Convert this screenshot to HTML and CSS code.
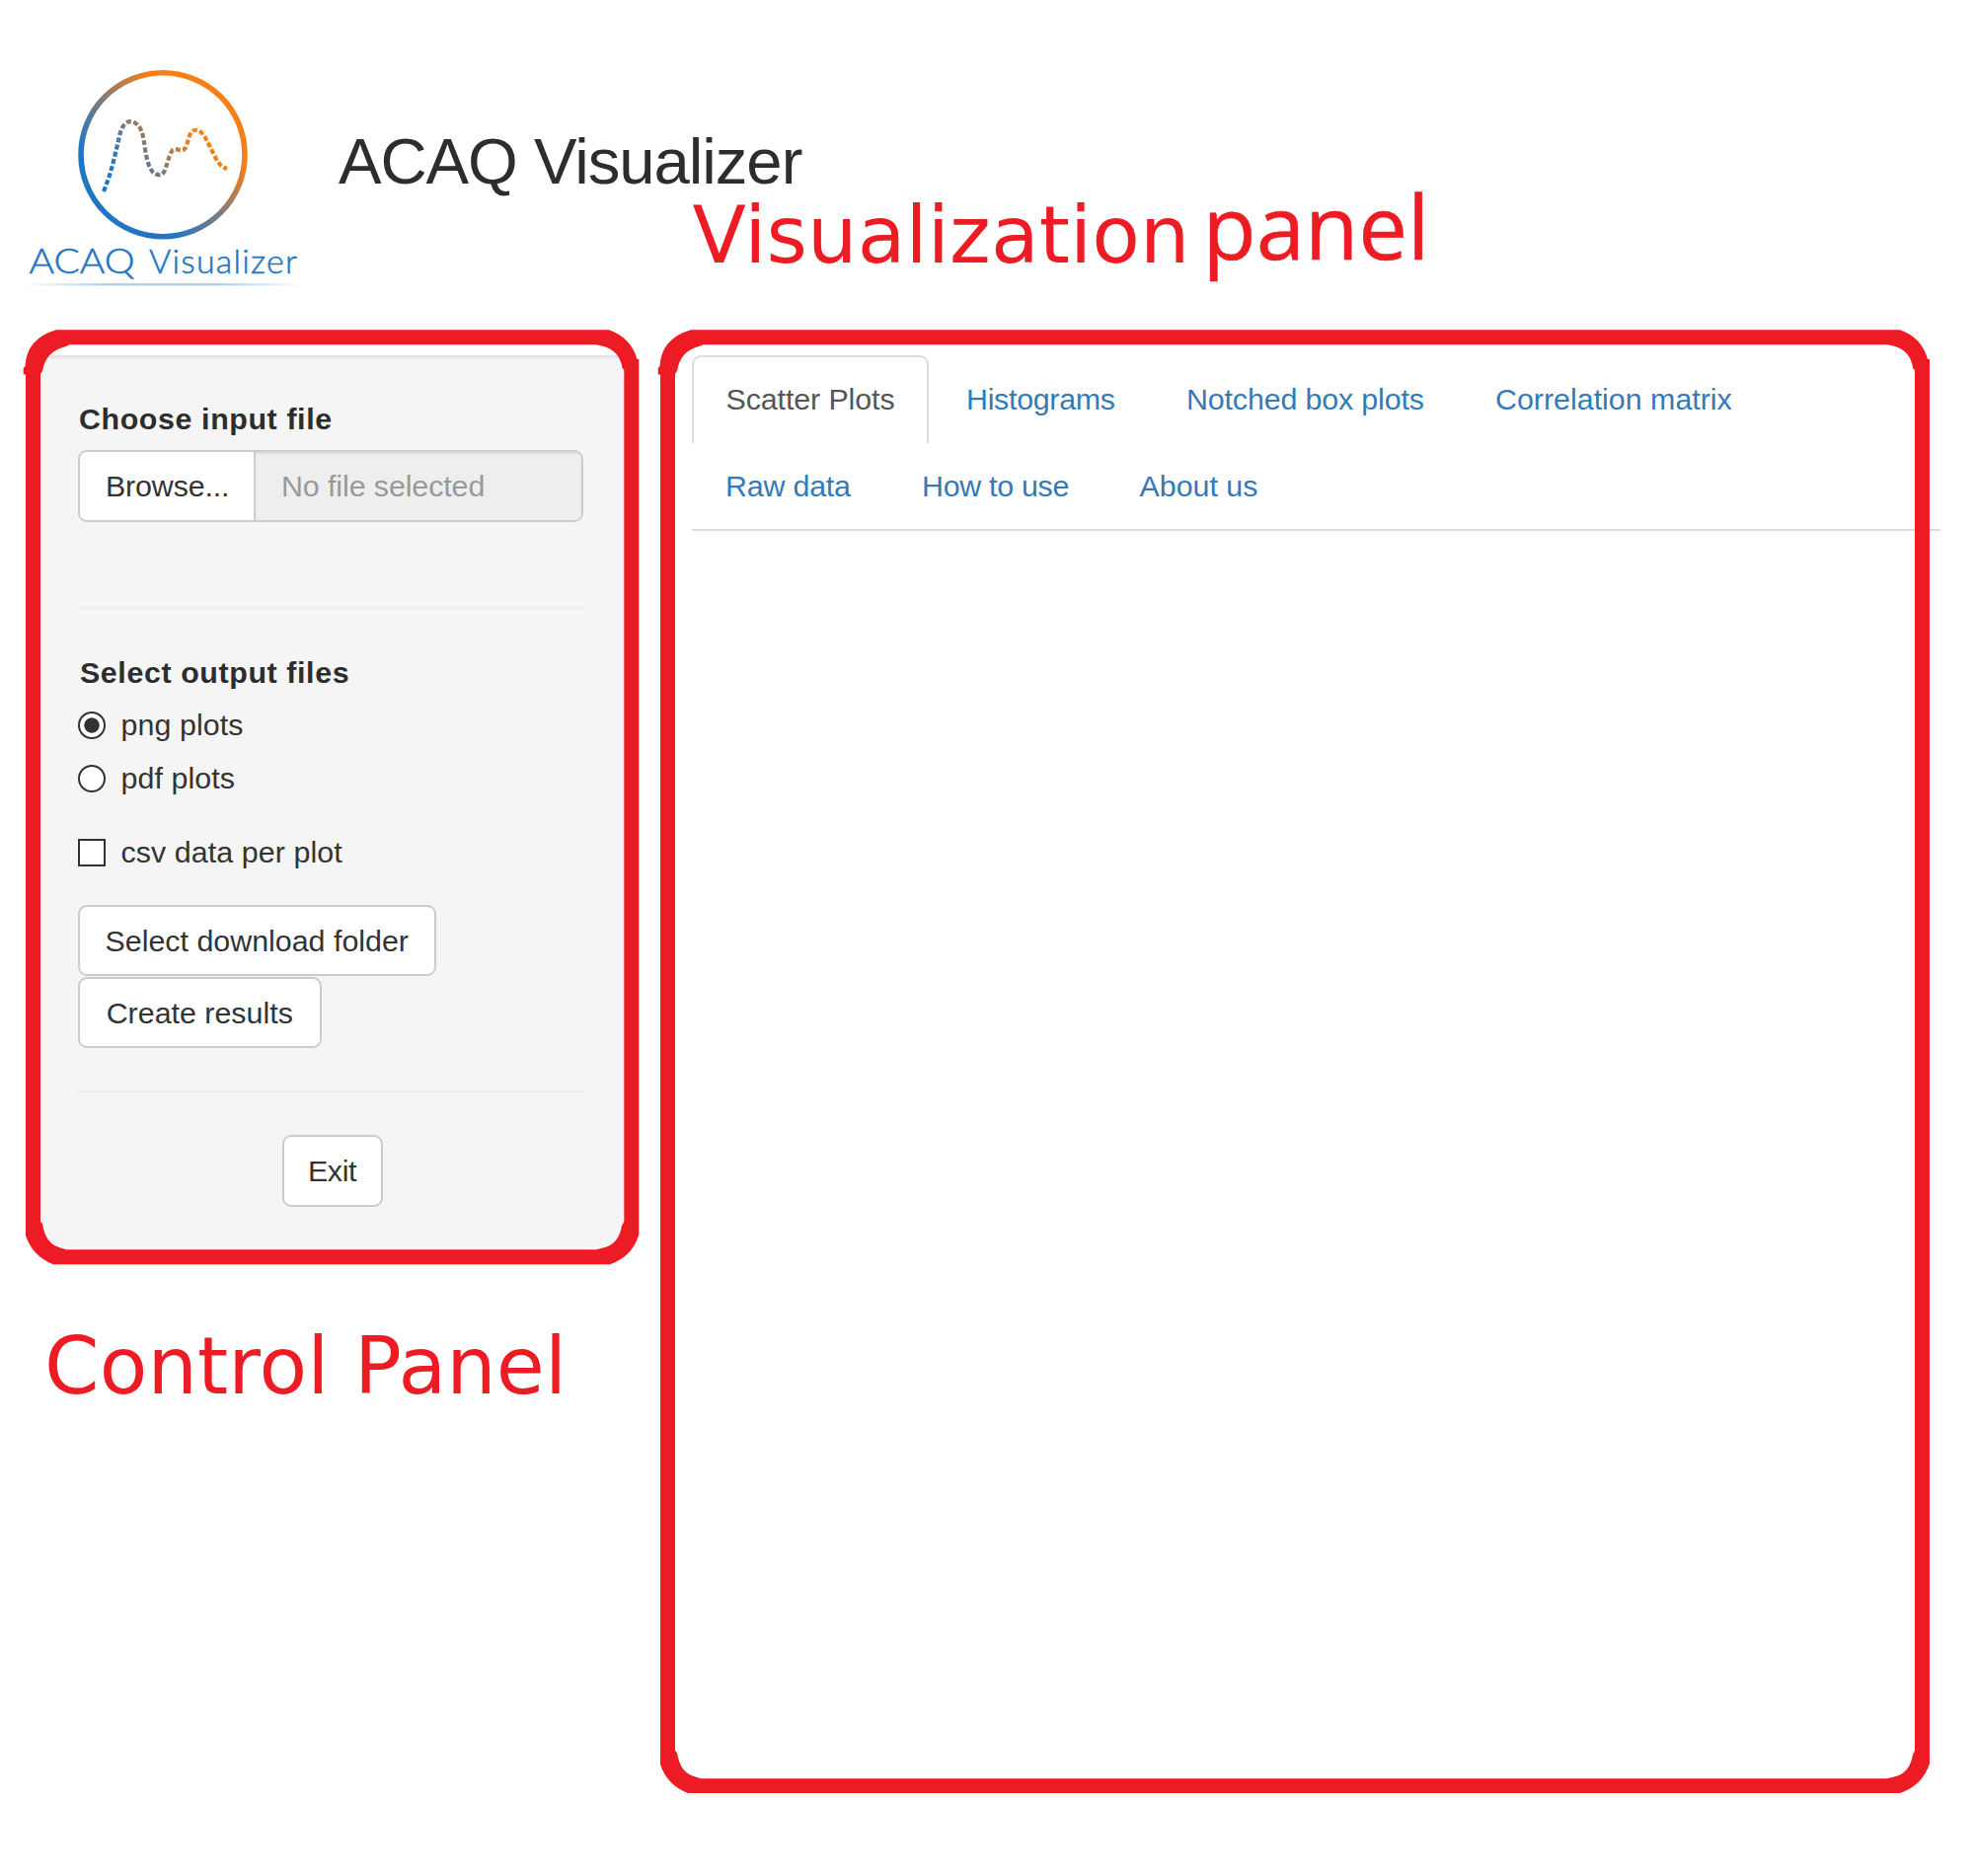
FILE: index.html
```html
<!DOCTYPE html>
<html lang="en">
<head>
<meta charset="utf-8">
<title>ACAQ Visualizer</title>
<link rel="stylesheet" href="styles.css">
</head>
<body>
<header class="header">
  <svg class="logo" width="300" height="260" viewBox="20 50 300 260">
    <defs>
      <linearGradient id="ring" gradientUnits="userSpaceOnUse" x1="115" y1="205" x2="212" y2="105">
        <stop offset="0" stop-color="#2176c4"/><stop offset=".12" stop-color="#2176c4"/>
        <stop offset=".47" stop-color="#7a7c80"/><stop offset=".85" stop-color="#f77f17"/><stop offset="1" stop-color="#f77f17"/>
      </linearGradient>
      <linearGradient id="curve" gradientUnits="userSpaceOnUse" x1="112" y1="176" x2="182" y2="122">
        <stop offset="0" stop-color="#2176c4"/><stop offset=".2" stop-color="#2f78b8"/>
        <stop offset=".55" stop-color="#8d7b6c"/><stop offset="1" stop-color="#f77f17"/>
      </linearGradient>
      <linearGradient id="line" gradientUnits="userSpaceOnUse" x1="24" y1="0" x2="306" y2="0">
        <stop offset="0" stop-color="#a9cbea" stop-opacity="0"/><stop offset=".3" stop-color="#a9cbea"/>
        <stop offset=".7" stop-color="#a9cbea"/><stop offset="1" stop-color="#a9cbea" stop-opacity="0"/>
      </linearGradient>
    </defs>
    <circle cx="165" cy="156.700" r="83" fill="none" stroke="url(#ring)" stroke-width="5.600"/>
    <path d="M105 194 C113 175 117 155 121 138 C124 125 129 122 135 123.500 C143 127 145 135 147 151 C150 170 154 177 162 177.300 C169 177 169 159 175 152 C179 149 183 155 187 151 C191 146 191 132 198 131.800 C206 131 211 146 218 159 C221 165 224 169 230 171" fill="none" stroke="url(#curve)" stroke-width="4.200" stroke-dasharray="5 2.400"/>
    <text class="logo-text" x="29.500" y="277" textLength="107" lengthAdjust="spacingAndGlyphs">ACAQ</text>
    <text class="logo-text logo-name" x="151" y="277" textLength="150" lengthAdjust="spacing">Visualizer</text>
    <rect x="24" y="287.200" width="282" height="2.200" fill="url(#line)"/>
  </svg>
  <h1 class="title">ACAQ Visualizer</h1>
</header>
<main class="main">
  <aside class="well">
    <label class="label">Choose input file</label>
    <div class="file">
      <span class="browse">Browse...</span>
      <span class="filename">No file selected</span>
    </div>
    <hr class="rule rule-first">
    <label class="label label-output">Select output files</label>
    <div class="option"><span class="radio checked"></span><span>png plots</span></div>
    <div class="option"><span class="radio"></span><span>pdf plots</span></div>
    <div class="option option-csv"><span class="box"></span><span>csv data per plot</span></div>
    <button class="btn btn-folder">Select download folder</button>
    <button class="btn btn-create">Create results</button>
    <hr class="rule rule-last">
    <button class="btn btn-exit">Exit</button>
  </aside>
  <section class="content">
    <nav class="tabs">
      <div class="tab-row">
        <a class="tab active">Scatter Plots</a>
        <a class="tab histograms">Histograms</a>
        <a class="tab boxplots">Notched box plots</a>
        <a class="tab">Correlation matrix</a>
      </div>
      <div class="tab-row">
        <a class="tab raw">Raw data</a>
        <a class="tab howto">How to use</a>
        <a class="tab">About us</a>
      </div>
    </nav>
  </section>
</main>
<svg class="notes" width="2000" height="1901" viewBox="0 0 2000 1901">
  <path fill-rule="evenodd" d="M57 334.300 H617 Q639 342 645.500 364 H647.300 V1251 Q641 1273 618 1281.300 H54 Q33 1273 26 1252 V379.500 H23.700 V373 L25.500 371 Q27 343 57 334.300 Z
    M70 349.300 L67 351 Q46 356 43 376 L41 379 V1238 L43 1240 Q46 1260 60 1264 L67 1266.300 H604 L613 1264 Q627 1260 630 1242 L632.300 1238 V375 L630.500 373 Q628 356 612 351 L604 349.300 Z"/>
  <path fill-rule="evenodd" d="M700 334.300 H1925 Q1947 342 1953 364 H1955 V1787 Q1948 1809 1925 1817 H697 Q676 1809 669 1788 V379.500 H666.700 V373 L668.500 371 Q670 343 700 334.300 Z
    M713 349.300 L708 351 Q689 356 686 376 L684 379 V1774 L686 1776 Q689 1796 703 1800 L710 1802.300 H1912 L1921 1800 Q1935 1796 1938 1778 L1940 1774 V375 L1938 373 Q1936 356 1920 351 L1912 349.300 Z"/>
  <text class="note" x="701.500" y="265.500" textLength="504">Visualization</text>
  <text class="note note-panel" transform="translate(1218.500 263.200) scale(1 1.050)" textLength="230" lengthAdjust="spacingAndGlyphs">panel</text>
  <text class="note" x="45" y="1411.700" textLength="529">Control Panel</text>
</svg>
</body>
</html>
```
FILE: styles.css
```css
* { box-sizing: border-box; }
body {
  margin: 0;
  width: 2000px;
  height: 1901px;
  position: relative;
  overflow: hidden;
  background: #fff;
  color: #333;
  font: 30.4px/44px "Liberation Sans", Arial, sans-serif;
}
.header { display: flex; height: 360px; padding: 50px 0 0 20px; }
.logo { flex: none; }
.logo-text { font: 300 34.500px Lato, sans-serif; fill: #2176c4; stroke: #2176c4; stroke-width: .5px; }
.logo-name { font-size: 34px; }
.title { margin: 76px 0 0 23px; font-size: 65.3px; font-weight: 400; line-height: 76px; color: #2d2d2d; white-space: nowrap; letter-spacing: -1.05px; }
.main { display: flex; padding-left: 36px; gap: 64px; }
.well {
  width: 601px;
  height: 914px;
  padding: 40px 41px 0;
  border: 2px solid #e3e3e3;
  border-radius: 9px;
  background: #f5f5f5;
  box-shadow: inset 0 2px 2px rgba(0, 0, 0, .05);
}
.label { display: block; height: 44px; padding-left: 1px; font-weight: 700; line-height: 44px; white-space: nowrap; letter-spacing: .6px; color: #2d2d2d; }
.label-output { padding-left: 2px; }
.file {
  display: flex;
  width: 512px;
  height: 73px;
  margin-top: 10px;
  border: 2px solid #ccc;
  border-radius: 9px;
  overflow: hidden;
  line-height: 68px;
}
.browse { width: 178px; padding-left: 26px; background: #fff; border-right: 2px solid #ccc; letter-spacing: -.15px; }
.filename { flex: 1; padding-left: 26px; background: #eee; color: #999; letter-spacing: -.1px; box-shadow: inset 0 2px 2px rgba(0, 0, 0, .075); }
.rule { height: 2px; margin: 0; border: 0; background: #eee; }
.rule-first { margin: 86px 0 42px; }
.rule-last { margin: 43px 0; }
.option { display: flex; align-items: center; gap: 15.500px; height: 44px; margin-top: 9.800px; line-height: 43px; white-space: nowrap; letter-spacing: .08px; }
.option-csv { margin: 31px 0; }
.radio, .box { width: 28px; height: 28px; border: 2px solid #333; background: #fff; }
.radio { border-radius: 50%; }
.checked { background: radial-gradient(circle, #333 7.300px, #fff 8px); }
.btn {
  display: block;
  height: 72.500px;
  margin: 0 0 .5px;
  padding: 0;
  border: 2px solid #ccc;
  border-radius: 9px;
  background: #fff;
  color: #333;
  font: inherit;
  white-space: nowrap;
}
.btn-folder { width: 362.500px; }
.btn-create { width: 246.500px; }
.btn-exit { width: 102px; margin-left: 206.500px; letter-spacing: -.4px; }
.tabs { width: 1264.500px; height: 178px; border-bottom: 2px solid #ddd; }
.tab-row { display: flex; height: 87.700px; }
.tab { flex: none; padding-left: 34px; line-height: 88px; color: #337ab7; white-space: nowrap; }
.active { width: 240px; height: 89px; padding-left: 32.500px; border: 2px solid #ddd; border-bottom: 0; border-radius: 9px 9px 0 0; line-height: 84px; color: #555; letter-spacing: -.1px; }
.histograms { width: 224px; padding-left: 38px; letter-spacing: -.3px; }
.boxplots { width: 316px; padding-left: 37px; letter-spacing: -.15px; }
.raw { width: 199px; letter-spacing: -.2px; }
.howto { width: 220.500px; letter-spacing: -.3px; }
.notes { position: absolute; left: 0; top: 0; fill: #ed1c24; }
.note { font: 79.500px "DejaVu Sans", sans-serif; }
.note-panel { font: 86px "Open Sans", sans-serif; stroke: #ed1c24; stroke-width: .5px; }
```
